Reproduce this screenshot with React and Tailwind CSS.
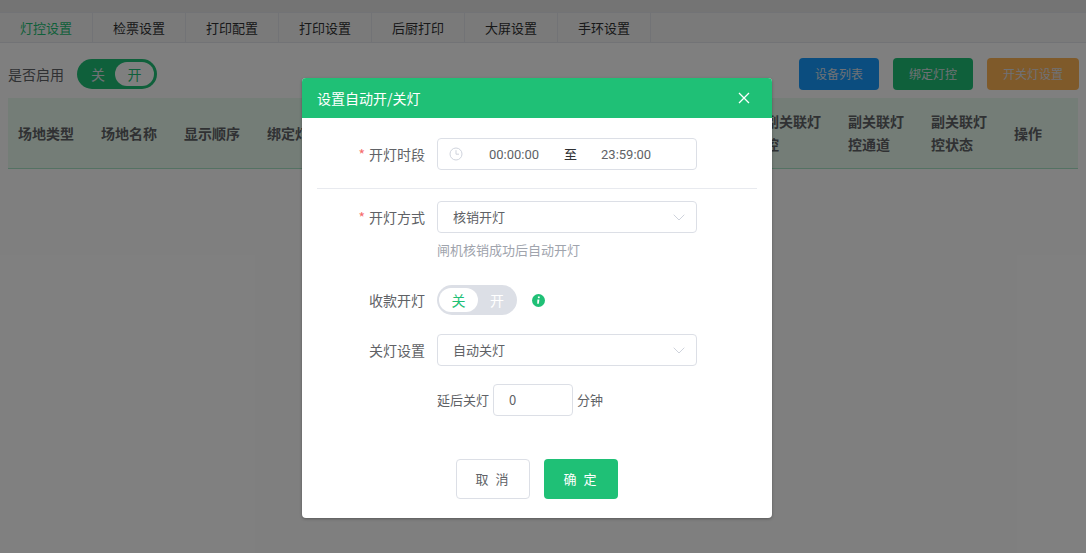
import React from "react";

const tabs = ["灯控设置", "检票设置", "打印配置", "打印设置", "后厨打印", "大屏设置", "手环设置"];
const cols = ["场地类型", "场地名称", "显示顺序", "绑定灯控", "灯控通道", "灯控状态", "主关联灯控", "主关联灯控通道", "主关联灯控状态", "副关联灯控", "副关联灯控通道", "副关联灯控状态", "操作"];

function Chevron() {
  return (
    <svg width="12" height="7" viewBox="0 0 12 7" fill="none" className="mr-[11px] shrink-0">
      <path d="M0.7 0.7 L6 6 L11.3 0.7" stroke="#cfd3dc" strokeWidth="1" />
    </svg>
  );
}

function Label({ req, children }) {
  return (
    <div className="w-[123px] shrink-0 pr-3 text-right text-[14px] text-[#606266]">
      {req && <span className="mr-1 text-[#f56c6c]">*</span>}
      {children}
    </div>
  );
}

function Select({ value }) {
  return (
    <div className="flex h-8 w-[260px] items-center justify-between rounded border border-[#dcdfe6] pl-[15px] text-[13px] text-[#606266]">
      <span>{value}</span>
      <Chevron />
    </div>
  );
}

export default function App() {
  return (
    <div className="relative h-[553px] w-[1086px] overflow-hidden bg-white font-['Noto_Sans_CJK_SC','Liberation_Sans',sans-serif]">
      <div className="h-3 bg-[#e8e8e8]" />
      <div className="flex h-[31px] border-b border-t border-[#e4e7ed] bg-[#f5f5f5]">
        {tabs.map((t, i) => (
          <div
            key={t}
            className={`flex w-[93px] items-center justify-center border-r border-[#e4e7ed] text-[13px] ${i === 0 ? "text-[#1fc076]" : "text-[#303133]"}`}
          >
            {t}
          </div>
        ))}
      </div>

      <div className="flex h-8 items-center justify-between pl-2 pr-[7px] mt-[15px]">
        <div className="flex items-center">
          <span className="text-[14px] text-[#606266]">是否启用</span>
          <div className="ml-[13px] flex h-[30px] w-20 items-center justify-between rounded-full bg-[#1fc076] pl-[14px] pr-[3px] text-[14px]">
            <span className="text-[#dfe3ea]">关</span>
            <span className="flex h-6 w-[39px] items-center justify-center rounded-full bg-white text-[#1fc076]">开</span>
          </div>
        </div>
        <div className="flex gap-[14px]">
          <div className="flex h-8 w-20 items-center justify-center rounded-sm bg-[#169bff] text-[12px] text-[#dfe3ea]">设备列表</div>
          <div className="flex h-8 w-20 items-center justify-center rounded-sm bg-[#1fc076] text-[12px] text-[#dfe3ea]">绑定灯控</div>
          <div className="flex h-8 w-[92px] items-center justify-center rounded-sm bg-[#ffb454] text-[12px] text-[#dfe3ea]">开关灯设置</div>
        </div>
      </div>

      <div className="ml-2 mt-2 grid h-[71px] w-[1070px] grid-cols-[repeat(13,83px)] items-center border-b border-[#a9e5c6] bg-[#e9fbee]">
        {cols.map((c) => (
          <div key={c} className="pl-[10px] pr-3 text-[14px] font-bold leading-[23px] text-[#606266]">
            {c}
          </div>
        ))}
      </div>

      <div className="absolute inset-0 bg-black/50" />

      <div className="absolute left-[302px] top-[78px] h-[440px] w-[470px] overflow-hidden rounded-sm bg-white shadow-[0_1px_3px_rgba(0,0,0,0.3)]">
        <div className="flex h-10 items-center justify-between bg-[#1fc076] pl-[15px] pr-[22px] text-[14px] text-white">
          <span>设置自动开/关灯</span>
          <svg width="12" height="12" viewBox="0 0 12 12" fill="none">
            <path d="M1 1 L11 11 M11 1 L1 11" stroke="white" strokeWidth="1.3" />
          </svg>
        </div>

        <div className="flex flex-col pl-[12px]">
          <div className="mt-5 flex items-center">
            <Label req>开灯时段</Label>
            <div className="flex h-8 w-[260px] items-center rounded border border-[#dcdfe6] text-[13px] text-[#606266]">
              <svg width="14" height="14" viewBox="0 0 14 14" fill="none" className="ml-[11px] shrink-0">
                <circle cx="7" cy="7" r="6" stroke="#cfd3dc" />
                <path d="M7 3.2 V7.2 H10" stroke="#cfd3dc" />
              </svg>
              <span className="ml-[26px] w-[51px] font-['Roboto','Liberation_Sans',sans-serif] text-[13px] leading-none">00:00:00</span>
              <span className="ml-[24px] text-[#303133]">至</span>
              <span className="ml-[24px] w-[51px] font-['Roboto','Liberation_Sans',sans-serif] text-[13px] leading-none">23:59:00</span>
            </div>
          </div>

          <div className="-ml-[12px] ml-[3px] mr-[15px] mt-[18px] h-px bg-[#e8eaef]" />

          <div className="mt-3 flex items-center">
            <Label req>开灯方式</Label>
            <Select value="核销开灯" />
          </div>
          <div className="ml-[123px] mt-[7px] text-[13px] leading-[20px] text-[#a0a4ad]">闸机核销成功后自动开灯</div>

          <div className="mt-[25px] flex h-[30px] items-center">
            <Label>收款开灯</Label>
            <div className="flex h-[30px] w-20 items-center rounded-full bg-[#dcdfe6] pl-[2px] text-[14px]">
              <span className="flex h-6 w-[39px] items-center justify-center rounded-full bg-white text-[#1fc076]">关</span>
              <span className="ml-[12px] text-white">开</span>
            </div>
            <svg width="13" height="13" viewBox="0 0 13 13" className="ml-[15px]">
              <circle cx="6.5" cy="6.5" r="6.5" fill="#1fc076" />
              <rect x="5.9" y="2.5" width="1.8" height="1.7" fill="white" />
              <path d="M5.4 5.4 H7.4 L6.8 9.8 H5.2 Z" fill="white" />
            </svg>
          </div>

          <div className="mt-[19px] flex items-center">
            <Label>关灯设置</Label>
            <Select value="自动关灯" />
          </div>

          <div className="ml-[123px] mt-[18px] flex items-center text-[13px] text-[#606266]">
            <span>延后关灯</span>
            <div className="ml-[4px] flex h-8 w-20 items-center rounded border border-[#dcdfe6] pl-[15px]">0</div>
            <span className="ml-[4px]">分钟</span>
          </div>

          <div className="ml-[142px] mt-[43px] flex gap-[14px] text-[13px]">
            <div className="flex h-10 w-[74px] items-center justify-center rounded border border-[#dcdfe6] tracking-[2px] text-[#606266]">取 消</div>
            <div className="flex h-10 w-[74px] items-center justify-center rounded bg-[#1fc076] tracking-[2px] text-white">确 定</div>
          </div>
        </div>
      </div>
    </div>
  );
}
